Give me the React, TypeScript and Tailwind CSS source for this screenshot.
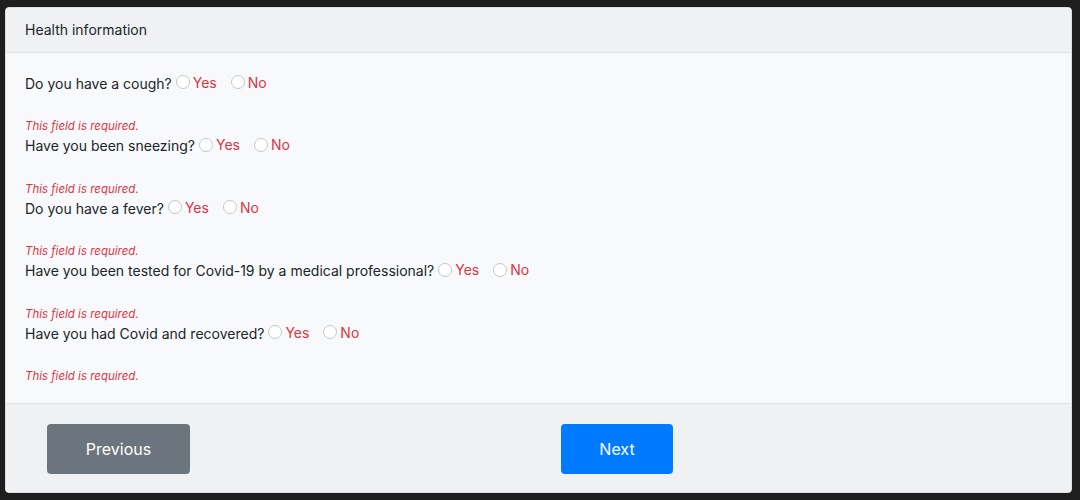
import React from 'react';

const questions = [
  'Do you have a cough?',
  'Have you been sneezing?',
  'Do you have a fever?',
  'Have you been tested for Covid-19 by a medical professional?',
  'Have you had Covid and recovered?',
];

const Radio: React.FC<{ label: string }> = ({ label }) => (
  <label className="flex items-center gap-[3px] -translate-y-[1px]">
    <span className="w-[14px] h-[14px] rounded-full border border-[#c4c7cb] bg-white" />
    <span className="text-[#dc3545] text-[14px]">{label}</span>
  </label>
);

const App: React.FC = () => {
  return (
    <div
      className="w-[1080px] h-[500px] bg-[#1e1e1f] pt-[7px] pl-[5px] pr-[8px] pb-[7px]"
      style={{ fontFamily: '"Inter", "Open Sans", sans-serif' }}
    >
      <div className="h-full flex flex-col rounded-[4px] border border-[#dcdfe3] bg-[#f8f9fa] overflow-hidden">
        {/* Header */}
        <div className="h-[45px] flex items-center pb-[2px] px-[19px] bg-[#f0f1f3] border-b border-[#dfe1e4] text-[14px] text-[#212529]">
          Health information
        </div>

        {/* Questions */}
        <div className="flex-1 flex flex-col px-[19px] pt-[18.5px]">
          {questions.map((q) => (
            <div key={q} className="h-[62.5px] shrink-0 flex flex-col">
              <div className="h-[24px] flex items-center text-[14px] text-[#212529]">
                <span>{q}</span>
                <div className="flex items-center gap-[14px] ml-[4px]">
                  <Radio label="Yes" />
                  <Radio label="No" />
                </div>
              </div>
              <div className="mt-[23.5px] h-[16px] flex items-center italic text-[11.5px] text-[#dc3545] translate-y-[1px]">
                This field is required.
              </div>
            </div>
          ))}
        </div>

        {/* Footer */}
        <div className="h-[89px] shrink-0 flex items-center pt-[2px] bg-[#f0f1f3] border-t border-[#dfe1e4] pl-[41px]">
          <button className="w-[143px] h-[50px] rounded-[4px] bg-[#6c757d] text-white text-[16px]">
            Previous
          </button>
          <button className="ml-[371px] w-[112px] h-[50px] rounded-[4px] bg-[#007bff] text-white text-[16px]">
            Next
          </button>
        </div>
      </div>
    </div>
  );
};

export default App;
